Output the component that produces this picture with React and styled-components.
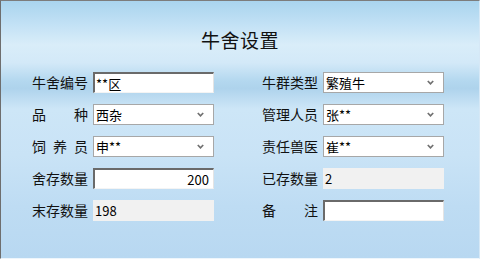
import React from "react";
import styled, { createGlobalStyle } from "styled-components";

const Global = createGlobalStyle`
  html, body { margin: 0; padding: 0; }
  body {
    width: 480px;
    height: 260px;
    overflow: hidden;
    font-family: "Noto Sans CJK SC", "Liberation Sans", sans-serif;
  }
`;

const Panel = styled.div`
  box-sizing: border-box;
  width: 480px;
  height: 259px;
  border-top: 1px solid #7c7c7c;
  border-left: 1px solid #6e6e6e;
  border-right: 1px solid #d6e8f6;
  border-bottom: 1px solid #eef6fc;
  background: linear-gradient(
    180deg,
    #a9d4ee 0%,
    #c2e1f5 9%,
    #d9edf9 17%,
    #d3e9f8 24%,
    #b4d8ef 31%,
    #aed3ec 34%,
    #cde6f7 42%,
    #c9e3f6 60%,
    #bedcf3 80%,
    #b8d8f1 100%
  );
  padding: 21px 0 0 31px;
`;

const Title = styled.h1`
  margin: 0 0 14px 0;
  padding-right: 31px;
  text-align: center;
  font-size: 19px;
  font-weight: normal;
  line-height: 36px;
  color: #111;
  letter-spacing: 0.5px;
`;

const Grid = styled.div`
  display: grid;
  grid-template-columns: 182px 182px;
  column-gap: 48px;
  row-gap: 11px;
`;

const Row = styled.div`
  display: flex;
  align-items: center;
  gap: 5px;
  height: 21px;
`;

const Label = styled.span`
  width: 56px;
  font-size: 14px;
  color: #111;
  text-align: justify;
  text-align-last: justify;
  white-space: nowrap;
  line-height: 21px;
`;

const fieldBase = `
  box-sizing: border-box;
  width: 121px;
  height: 21px;
  font-size: 13px;
  color: #000;
  display: flex;
  align-items: center;
  line-height: 1;
`;

const TextBox = styled.div`
  ${fieldBase}
  background: #fff;
  border-top: 2px solid #6a6a6a;
  border-left: 2px solid #6a6a6a;
  border-right: 1px solid #e4e4e4;
  border-bottom: 1px solid #f4f4f4;
  padding: 0 4px 0 1px;
  justify-content: ${(p) => (p.right ? "flex-end" : "flex-start")};
`;

const Select = styled.div`
  ${fieldBase}
  background: #fff;
  border: 1px solid #a7a7a7;
  padding: 0 9px 0 2px;
  justify-content: space-between;
`;

const ReadOnly = styled.div`
  ${fieldBase}
  background: #f1f1f1;
  padding: 0 2px;
`;

const Chevron = () => (
  <svg width="7" height="5" viewBox="0 0 7 5">
    <path d="M0.8 1 L3.5 3.8 L6.2 1" fill="none" stroke="#707070" strokeWidth="1.7" />
  </svg>
);

const fields = [
  { label: "牛舍编号", kind: "text", value: "**区" },
  { label: "牛群类型", kind: "select", value: "繁殖牛" },
  { label: "品　种", kind: "select", value: "西杂" },
  { label: "管理人员", kind: "select", value: "张**" },
  { label: "饲 养 员", kind: "select", value: "申**" },
  { label: "责任兽医", kind: "select", value: "崔**" },
  { label: "舍存数量", kind: "text", value: "200", right: true },
  { label: "已存数量", kind: "readonly", value: "2" },
  { label: "末存数量", kind: "readonly", value: "198" },
  { label: "备　注", kind: "text", value: "" },
];

function Field({ kind, value, right }) {
  if (kind === "select") {
    return (
      <Select>
        <span>{value}</span>
        <Chevron />
      </Select>
    );
  }
  if (kind === "readonly") return <ReadOnly>{value}</ReadOnly>;
  return <TextBox right={right}>{value}</TextBox>;
}

export default function App() {
  return (
    <>
      <Global />
      <Panel>
        <Title>牛舍设置</Title>
        <Grid>
          {fields.map((f) => (
            <Row key={f.label}>
              <Label>{f.label}</Label>
              <Field {...f} />
            </Row>
          ))}
        </Grid>
      </Panel>
    </>
  );
}
